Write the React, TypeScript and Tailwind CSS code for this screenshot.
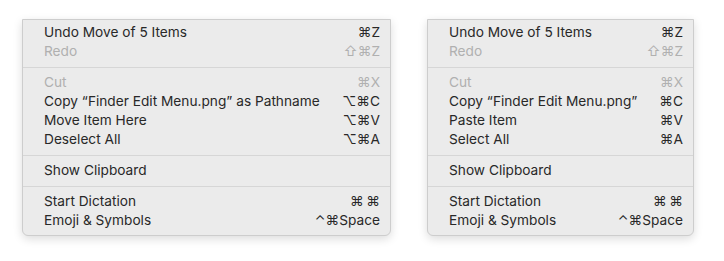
// Finder Edit menu, two variants side by side
type Item =
  | { kind: 'item'; label: string; keys?: string; disabled?: boolean }
  | { kind: 'sep' }

const leftMenu: Item[] = [
  { kind: 'item', label: 'Undo Move of 5 Items', keys: '⌘Z' },
  { kind: 'item', label: 'Redo', keys: '⇧⌘Z', disabled: true },
  { kind: 'sep' },
  { kind: 'item', label: 'Cut', keys: '⌘X', disabled: true },
  { kind: 'item', label: 'Copy “Finder Edit Menu.png” as Pathname', keys: '⌥⌘C' },
  { kind: 'item', label: 'Move Item Here', keys: '⌥⌘V' },
  { kind: 'item', label: 'Deselect All', keys: '⌥⌘A' },
  { kind: 'sep' },
  { kind: 'item', label: 'Show Clipboard' },
  { kind: 'sep' },
  { kind: 'item', label: 'Start Dictation', keys: '⌘\u2009⌘' },
  { kind: 'item', label: 'Emoji & Symbols', keys: '⌃⌘Space' },
]

const rightMenu: Item[] = [
  { kind: 'item', label: 'Undo Move of 5 Items', keys: '⌘Z' },
  { kind: 'item', label: 'Redo', keys: '⇧⌘Z', disabled: true },
  { kind: 'sep' },
  { kind: 'item', label: 'Cut', keys: '⌘X', disabled: true },
  { kind: 'item', label: 'Copy “Finder Edit Menu.png”', keys: '⌘C' },
  { kind: 'item', label: 'Paste Item', keys: '⌘V' },
  { kind: 'item', label: 'Select All', keys: '⌘A' },
  { kind: 'sep' },
  { kind: 'item', label: 'Show Clipboard' },
  { kind: 'sep' },
  { kind: 'item', label: 'Start Dictation', keys: '⌘\u2009⌘' },
  { kind: 'item', label: 'Emoji & Symbols', keys: '⌃⌘Space' },
]

function Menu({ items, width }: { items: Item[]; width: string }) {
  return (
    <div
      className={`${width} flex flex-col bg-[#ebebeb] border border-[#cdcdcd] rounded-b-[6px] pt-[3px] pb-[5px] shadow-[0_3px_10px_rgba(0,0,0,0.14)]`}
    >
      {items.map((item, i) =>
        item.kind === 'sep' ? (
          <div key={i} className="h-[12px] flex items-center">
            <div className="h-px w-full bg-[#d6d6d6]" />
          </div>
        ) : (
          <div
            key={i}
            className={`h-[19px] flex items-center justify-between pl-[21px] pr-[10px] text-[13.7px] leading-none pt-px ${
              item.disabled ? 'text-[#b0b0b0]' : 'text-[#282828]'
            }`}
          >
            <span>{item.label}</span>
            {item.keys && <span className="whitespace-pre">{item.keys}</span>}
          </div>
        ),
      )}
    </div>
  )
}

export default function App() {
  return (
    <div
      className="w-[724px] h-[261px] bg-white flex items-start gap-[36px] pl-[22px] pt-[19px]"
      style={{ fontFamily: 'Inter, "DejaVu Sans", sans-serif' }}
    >
      <Menu items={leftMenu} width="w-[369px]" />
      <Menu items={rightMenu} width="w-[267px]" />
    </div>
  )
}
